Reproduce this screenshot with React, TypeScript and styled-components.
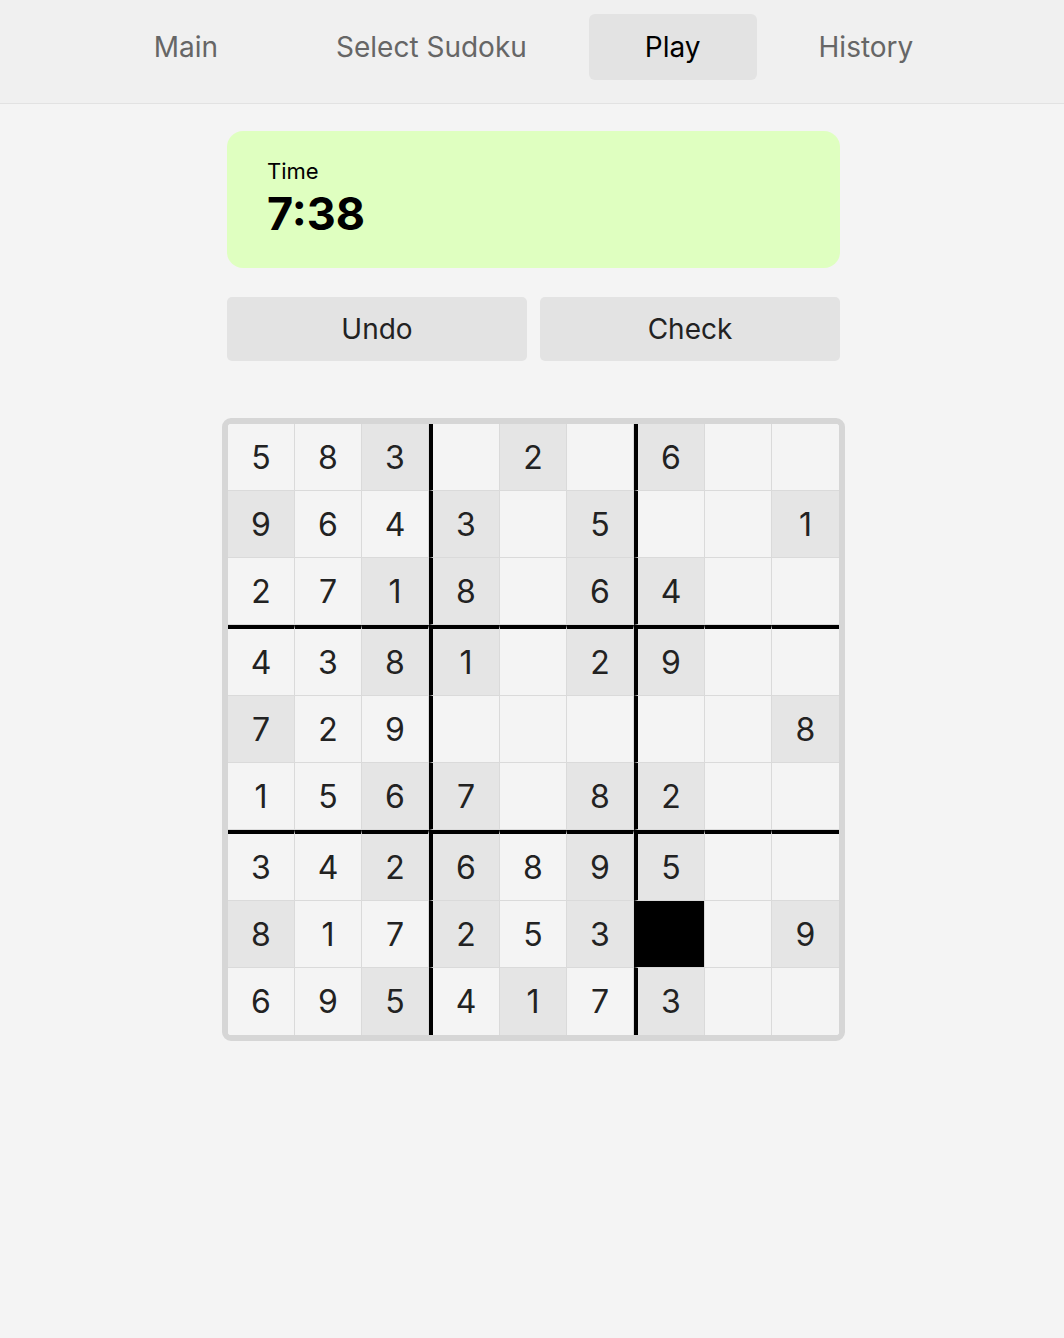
import React from "react";
import styled, { createGlobalStyle } from "styled-components";

const Global = createGlobalStyle`
  html, body { margin: 0; padding: 0; background: #f4f4f4; }
  body { font-family: Inter, "Noto Sans", "Liberation Sans", sans-serif; color: #222; }
  * { box-sizing: border-box; }
`;

const Page = styled.div`
  min-height: 1338px;
  background: #f4f4f4;
`;

const Nav = styled.nav`
  display: flex;
  justify-content: center;
  gap: 6px;
  padding: 14px 0 23px 3px;
  background: #f0f0f0;
  border-bottom: 1px solid #e2e2e2;
`;

const NavItem = styled.div<{ $active?: boolean }>`
  padding: 16px 56px;
  font-size: 28px;
  line-height: 34px;
  border-radius: 6px;
  color: ${(p) => (p.$active ? "#000" : "#666")};
  background: ${(p) => (p.$active ? "#e3e3e3" : "transparent")};
`;

const Main = styled.main`
  display: flex;
  flex-direction: column;
  align-items: center;
  padding: 27px 0 0 3px;
`;

const Column = styled.div`
  width: 613px;
  display: flex;
  flex-direction: column;
`;

const TimeCard = styled.div`
  background: #dfffc0;
  border-radius: 16px;
  padding: 27px 40px 26px;
  display: flex;
  flex-direction: column;
`;

const TimeLabel = styled.div`
  font-size: 22px;
  line-height: 27px;
  color: #000;
`;

const TimeValue = styled.div`
  font-size: 45px;
  line-height: 57px;
  font-weight: 700;
  color: #000;
`;

const Buttons = styled.div`
  display: grid;
  grid-template-columns: 1fr 1fr;
  gap: 13px;
  margin-top: 29px;
`;

const Button = styled.button`
  height: 64px;
  border: none;
  border-radius: 5px;
  background: #e3e3e3;
  font-family: inherit;
  font-size: 28px;
  color: #222;
`;

const Board = styled.div`
  margin-top: 57px;
  border: 6px solid #d6d6d6;
  border-radius: 9px;
  overflow: hidden;
  display: grid;
  grid-template-columns: repeat(9, auto);
  background: #f4f4f4;
`;

const Cell = styled.div<{ $given: boolean; $selected: boolean; $col: number; $row: number }>`
  width: ${(p) => (p.$col === 3 || p.$col === 6 ? 71 : 67)}px;
  height: ${(p) => (p.$row === 3 || p.$row === 6 ? 71 : 67)}px;
  display: flex;
  align-items: center;
  justify-content: center;
  font-size: 32px;
  color: #222;
  background: ${(p) => (p.$selected ? "#000" : p.$given ? "#e5e5e5" : "#f4f4f4")};
  border-right: ${(p) => (p.$col === 8 ? "none" : "1px solid #dadada")};
  border-bottom: ${(p) => (p.$row === 8 ? "none" : "1px solid #dadada")};
  border-left: ${(p) => (p.$col === 3 || p.$col === 6 ? "4px solid #000" : "none")};
  border-top: ${(p) => (p.$row === 3 || p.$row === 6 ? "4px solid #000" : "none")};
`;

const values = [
  "583_2_6__",
  "9643_5__1",
  "2718_64__",
  "4381_29__",
  "729_____8",
  "1567_82__",
  "3426895__",
  "817253__9",
  "6954173__",
];

const given: number[][] = [
  [2, 4, 6],
  [0, 3, 5, 8],
  [2, 3, 5, 6],
  [2, 3, 5, 6],
  [0, 8],
  [2, 3, 5, 6],
  [2, 3, 5, 6],
  [0, 3, 5, 8],
  [2, 4, 6],
];

export default function App() {
  return (
    <Page>
      <Global />
      <Nav>
        <NavItem>Main</NavItem>
        <NavItem>Select Sudoku</NavItem>
        <NavItem $active>Play</NavItem>
        <NavItem>History</NavItem>
      </Nav>
      <Main>
        <Column>
          <TimeCard>
            <TimeLabel>Time</TimeLabel>
            <TimeValue>7:38</TimeValue>
          </TimeCard>
          <Buttons>
            <Button>Undo</Button>
            <Button>Check</Button>
          </Buttons>
        </Column>
        <Board>
          {values.map((row, r) =>
            row.split("").map((ch, c) => (
              <Cell
                key={`${r}-${c}`}
                $row={r}
                $col={c}
                $given={given[r].includes(c)}
                $selected={r === 7 && c === 6}
              >
                {ch === "_" ? "" : ch}
              </Cell>
            ))
          )}
        </Board>
      </Main>
    </Page>
  );
}
